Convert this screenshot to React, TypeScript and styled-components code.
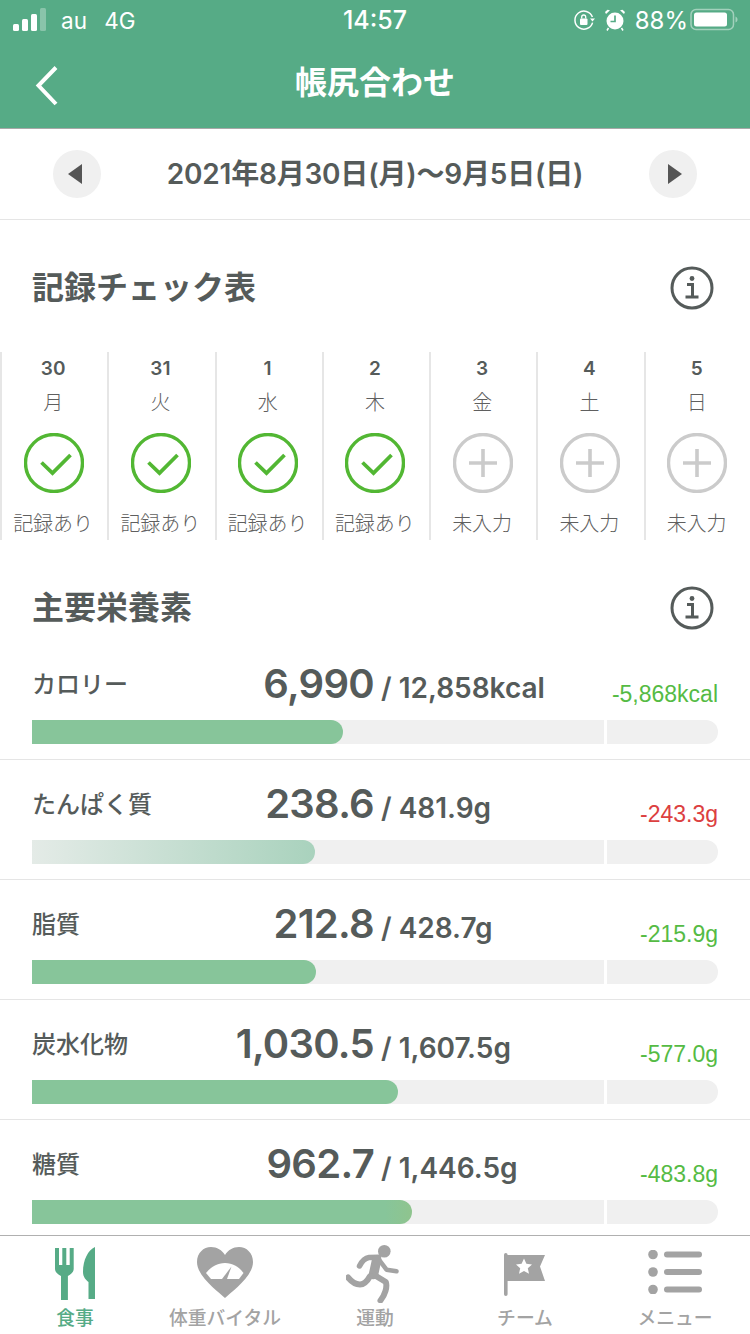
import React from "react";
import styled, { createGlobalStyle } from "styled-components";

const Global = createGlobalStyle`
  html, body { margin: 0; padding: 0; background: #fff; }
  body { width: 750px; height: 1334px; overflow: hidden; font-family: "Inter", "Noto Sans CJK JP", sans-serif; color: #555b5a; }
`;
const Page = styled.div`
  width: 750px; height: 1334px; display: flex; flex-direction: column; overflow: hidden; background: #fff;
`;
const TopArea = styled.header`
  background: #56ab86; height: 128px; border-bottom: 1px solid #a8a8a8; flex: none; color: #fff;
  display: flex; flex-direction: column;
`;
const StatusBar = styled.div`
  height: 40px; display: flex; align-items: center; padding: 0 12px 0 13px; position: relative;
  font-size: 22.5px; font-weight: 400;
`;
const Carrier = styled.span`
  margin-left: 15px; word-spacing: 11px;
`;
const Clock = styled.span`
  position: absolute; left: 0; right: 0; text-align: center; font-weight: 500; font-size: 25px;
`;
const StatusRight = styled.div`
  margin-left: auto; display: flex; align-items: center; gap: 10px;
`;
const Percent = styled.span`
  font-size: 24px; margin-right: -8px;
`;
const NavBar = styled.div`
  flex: 1; display: flex; align-items: center; justify-content: center; position: relative; padding-bottom: 3px;
`;
const BackBtn = styled.div`
  position: absolute; left: 35px; top: 25px; display: flex;
`;
const Title = styled.h1`
  margin: 0; font-size: 32px; font-weight: 700; color: #fff; line-height: 40px;
`;
const DateBar = styled.div`
  height: 90px; border-bottom: 1px solid #e5e5e5; flex: none; display: flex; align-items: center; justify-content: space-between; padding: 0 53px;
`;
const RoundBtn = styled.div<{ $shift: number }>`
  width: 48px; height: 48px; border-radius: 50%; background: #f0f0f0; display: flex; align-items: center; justify-content: center;
  padding-left: ${(p) => (p.$shift > 0 ? p.$shift : 0)}px;
  padding-right: ${(p) => (p.$shift < 0 ? -p.$shift : 0)}px;
  box-sizing: border-box;
`;
const DateText = styled.div`
  font-size: 28px; font-weight: 600; color: #555b5a; margin-top: -4px; letter-spacing: -0.2px;
`;
const SectionHead = styled.div<{ $h: number; $pad: number }>`
  height: ${(p) => p.$h}px; padding: ${(p) => p.$pad}px 36px 0 32px; box-sizing: border-box;
  display: flex; align-items: center; justify-content: space-between; flex: none;
`;
const SectionTitle = styled.h2`
  margin: -6px 0 0; font-size: 32px; font-weight: 700; color: #555b5a;
`;
const Week = styled.div`
  display: grid; grid-template-columns: repeat(7, 107.25px); height: 188px; flex: none;
`;
const Day = styled.div`
  border-left: 2px solid #e6e6e6; padding-right: 2px; display: flex; flex-direction: column; align-items: center; color: #555b5a;
`;
const DayNum = styled.div`
  font-size: 19px; font-weight: 600; line-height: 24px; margin: 5px 1px 0 0;
`;
const DayName = styled.div`
  font-size: 20px; font-weight: 300; line-height: 24px; margin: 10px 1px 0 0; color: #5f5f5f;
`;
const DayIcon = styled.div`
  margin-top: 18px; height: 60px; display: flex;
`;
const DayState = styled.div`
  font-size: 20px; font-weight: 300; line-height: 24px; margin: 19px 1px 0 0; color: #5f5f5f; white-space: nowrap;
`;
const Rows = styled.div`
  flex: 1; display: flex; flex-direction: column; overflow: hidden;
`;
const Row = styled.div`
  height: 119px; border-bottom: 1px solid #e5e5e5; flex: none; padding: 0 32px; display: flex; flex-direction: column;
`;
const RowTop = styled.div`
  height: 80px; box-sizing: border-box; padding-top: 8px; position: relative; display: grid; grid-template-columns: 342px auto 1fr; align-items: baseline;
`;
const Label = styled.div`
  position: absolute; left: 0; top: 30px; font-size: 24px; font-weight: 500; line-height: 30px; color: #555b5a;
`;
const Value = styled.div`
  grid-column: 1; text-align: right; font-size: 40px; font-weight: 600; letter-spacing: -0.7px; line-height: 72px; color: #555b5a;
`;
const Goal = styled.div`
  grid-column: 2; font-size: 28px; font-weight: 600; margin-left: 7px; white-space: nowrap; color: #555b5a;
`;
const Delta = styled.div<{ $bad?: boolean }>`
  grid-column: 3; text-align: right; font-family: "Liberation Sans", sans-serif; font-size: 23px; font-weight: 400;
  color: ${(p) => (p.$bad ? "#dc4040" : "#55bb44")}; position: relative; top: 4px;
`;
const Track = styled.div`
  height: 24px; background: #f0f0f0; border-radius: 0 12px 12px 0; position: relative; overflow: hidden;
`;
const Fill = styled.div<{ $kind: "plain" | "pale" | "tip" }>`
  height: 100%; border-radius: 0 12px 12px 0;
  background: ${(p) =>
    p.$kind === "pale"
      ? "linear-gradient(90deg, #e4ebe7 0%, #a9d2bd 100%)"
      : p.$kind === "tip"
      ? "linear-gradient(90deg, #87c59a 0%, #87c59a 93%, #8fc48e 100%)"
      : "#87c59a"};
`;
const Tick = styled.div`
  position: absolute; left: 572px; top: 0; bottom: 0; width: 3px; background: #fff;
`;
const TabBar = styled.nav`
  position: absolute; left: 0; right: 0; top: 1235px; height: 99px; box-sizing: border-box; background: #fff; border-top: 1px solid #b0b0b0; display: grid; grid-template-columns: repeat(5, 150px);
`;
const Tab = styled.div<{ $on?: boolean }>`
  display: flex; flex-direction: column; align-items: center; color: ${(p) => (p.$on ? "#56ab86" : "#a3a3a3")};
  font-size: 18.8px; font-weight: 500;
`;
const TabIcon = styled.div<{ $top: number }>`
  height: 71px; display: flex; align-items: flex-start; justify-content: center; padding-top: ${(p) => p.$top}px; box-sizing: border-box;
`;
const TabLabel = styled.div`
  line-height: 24px; white-space: nowrap;
`;

const Info = () => (
  <svg width="44" height="44" viewBox="0 0 44 44" fill="none">
    <circle cx="22" cy="22" r="20" stroke="#555b5a" strokeWidth="3" />
    <circle cx="22" cy="12.5" r="2.4" fill="#555b5a" />
    <path d="M17 18.500h5.500V30M15.500 31h13" stroke="#555b5a" strokeWidth="3" />
  </svg>
);
const Check = () => (
  <svg width="60" height="60" viewBox="0 0 60 60" fill="none">
    <circle cx="30" cy="30" r="28.500" stroke="#52b733" strokeWidth="3.400" />
    <path d="M17.500 29.500l11 10.500 18-18" stroke="#52b733" strokeWidth="3.800" />
  </svg>
);
const Plus = () => (
  <svg width="60" height="60" viewBox="0 0 60 60" fill="none">
    <circle cx="30" cy="30" r="28.500" stroke="#cbcbcb" strokeWidth="3.400" />
    <path d="M16 30h28M30 16v28" stroke="#cbcbcb" strokeWidth="3.600" />
  </svg>
);
const Signal = () => (
  <svg width="33" height="24" viewBox="0 0 33 24">
    <rect x="0" y="16" width="6" height="7" rx="1.500" fill="#fff" />
    <rect x="9" y="11" width="6" height="12" rx="1.500" fill="#fff" />
    <rect x="18" y="6" width="6" height="17" rx="1.500" fill="#fff" />
    <rect x="27" y="0" width="6" height="23" rx="1.500" fill="#fff" opacity=".3" />
  </svg>
);
const RotationLock = () => (
  <svg width="22" height="22" viewBox="0 0 22 22" fill="none">
    <path d="M19.400 8A9 9 0 1 0 19.600 13.600" stroke="#fff" strokeWidth="1.500" />
    <path d="M17 9.500h5l-2.500 3z" fill="#fff" />
    <rect x="7" y="9.500" width="7.500" height="6.500" rx="1" fill="#fff" />
    <path d="M8.700 9.500V8a2 2 0 0 1 4 0v1.500" stroke="#fff" strokeWidth="1.300" />
  </svg>
);
const Alarm = () => (
  <svg width="20" height="22" viewBox="0 0 20 22" fill="none">
    <circle cx="10" cy="12" r="8.500" fill="#fff" />
    <path d="M10 6.500V12.500H5.500" stroke="#56ab86" strokeWidth="1.700" />
    <path d="M1 5L5 1.200 2.500.8 0 3zM19 5L15 1.200 17.500.8 20 3z" fill="#fff" />
    <path d="M3.500 19L2 21.500M16.500 19l1.500 2.500" stroke="#fff" strokeWidth="1.500" />
  </svg>
);
const Battery = () => (
  <svg width="48" height="24" viewBox="0 0 48 24" fill="none">
    <rect x="1" y="1.500" width="42.500" height="20" rx="5" stroke="#fff" strokeOpacity=".45" strokeWidth="1.500" />
    <rect x="4" y="4.500" width="33" height="14" rx="2.500" fill="#fff" />
    <path d="M45.500 8.500v6c1.200-.5 2-1.500 2-3s-.8-2.500-2-3z" fill="#fff" fillOpacity=".45" />
  </svg>
);
const Chevron = () => (
  <svg width="24" height="42" viewBox="0 0 24 42" fill="none">
    <path d="M21 2.500L3.500 20.500 21 39" stroke="#fff" strokeWidth="4" />
  </svg>
);
const TriLeft = () => (
  <svg width="14" height="20" viewBox="0 0 14 20"><path d="M14 0v20L0 10z" fill="#555" /></svg>
);
const TriRight = () => (
  <svg width="14" height="20" viewBox="0 0 14 20"><path d="M0 0v20L14 10z" fill="#555" /></svg>
);
const FoodIcon = () => (
  <svg width="40" height="53" viewBox="0 0 40 53" fill="#56ab86">
    <path d="M0 1h4v17h3.300V1h4v17h3.400V1h4v21c0 3-2.500 5-5.800 7v24H6V29C2.500 27 0 25 0 22z" />
    <path d="M40 0v52h-6.500V35C31 33 28 30 28 25 28 13 33 3 40 0z" />
  </svg>
);
const HeartIcon = () => (
  <svg width="56" height="52" viewBox="0 0 56 52">
    <path d="M28 51C22 45 0 30 0 15 0 6 6.500 0 14 0c6 0 11 3 14 8 3-5 8-8 14-8 7.500 0 14 6 14 15 0 15-22 30-28 36z" fill="#a3a3a3" />
    <path d="M9 26C14 20 20 16 28 16s14 4 18.500 10L42 32H14z" fill="#fff" />
    <path d="M25 32l9.500-12.500L30 32z" fill="#a3a3a3" />
  </svg>
);
const RunIcon = () => (
  <svg width="58" height="58" viewBox="0 0 58 58" fill="none" stroke="#a3a3a3" strokeLinecap="round" strokeLinejoin="round">
    <circle cx="38.300" cy="6.300" r="6.300" fill="#a3a3a3" stroke="none" />
    <path d="M13.500 21C16 16 19 13 23 12.500l9.500-.2" strokeWidth="5.500" />
    <path d="M32.500 14l8 10.700 10 1.600" strokeWidth="4.500" />
    <path d="M30.700 14.700L27.500 29.500" strokeWidth="9.500" />
    <path d="M28.300 30l11.500 7c1.800 5-1 13-5.300 18.500" strokeWidth="6" />
    <path d="M24 31.300c-2.500 4.500-6 8.200-10 8.200-4.500 0-8.500-2.700-12-7" strokeWidth="6" />
  </svg>
);
const FlagIcon = () => (
  <svg width="42" height="43" viewBox="0 0 42 43">
    <path d="M0 1.800a1.800 1.800 0 0 1 3.600 0V2H41l-5 11.500L41 28H3.600v13.200a1.800 1.800 0 0 1-3.600 0z" fill="#a3a3a3" />
    <path d="M20 5.500l2.400 5.300 5.600.6-4.200 3.800 1.200 5.600-5-2.900-5 2.900 1.200-5.600-4.200-3.800 5.600-.6z" fill="#fff" />
  </svg>
);
const MenuIcon = () => (
  <svg width="54" height="44" viewBox="0 0 54 44" fill="#a3a3a3">
    <circle cx="5" cy="4.500" r="4.800" /><circle cx="5" cy="22" r="4.800" /><circle cx="5" cy="39.500" r="4.800" />
    <rect x="16" y="1.500" width="38" height="6" rx="3" />
    <rect x="16" y="19" width="38" height="6" rx="3" />
    <rect x="16" y="36.500" width="38" height="6" rx="3" />
  </svg>
);

const days = [
  ["30", "月", true], ["31", "火", true], ["1", "水", true], ["2", "木", true],
  ["3", "金", false], ["4", "土", false], ["5", "日", false],
] as const;

const nutrients = [
  { label: "カロリー", value: "6,990", goal: "/ 12,858kcal", delta: "-5,868kcal", pct: 311, kind: "plain" },
  { label: "たんぱく質", value: "238.6", goal: "/ 481.9g", delta: "-243.3g", pct: 283, kind: "pale", bad: true },
  { label: "脂質", value: "212.8", goal: "/ 428.7g", delta: "-215.9g", pct: 284, kind: "plain" },
  { label: "炭水化物", value: "1,030.5", goal: "/ 1,607.5g", delta: "-577.0g", pct: 366, kind: "plain" },
  { label: "糖質", value: "962.7", goal: "/ 1,446.5g", delta: "-483.8g", pct: 380, kind: "tip" },
] as const;

export default function App() {
  return (
    <Page>
      <Global />
      <TopArea>
        <StatusBar>
          <Signal />
          <Carrier>au 4G</Carrier>
          <Clock>14:57</Clock>
          <StatusRight>
            <RotationLock />
            <Alarm />
            <Percent>88%</Percent>
            <Battery />
          </StatusRight>
        </StatusBar>
        <NavBar>
          <BackBtn><Chevron /></BackBtn>
          <Title>帳尻合わせ</Title>
        </NavBar>
      </TopArea>
      <DateBar>
        <RoundBtn $shift={-4}><TriLeft /></RoundBtn>
        <DateText>2021年8月30日(月)〜9月5日(日)</DateText>
        <RoundBtn $shift={4}><TriRight /></RoundBtn>
      </DateBar>
      <SectionHead $h={132} $pad={4}>
        <SectionTitle>記録チェック表</SectionTitle>
        <Info />
      </SectionHead>
      <Week>
        {days.map(([n, d, ok]) => (
          <Day key={n}>
            <DayNum>{n}</DayNum>
            <DayName>{d}</DayName>
            <DayIcon>{ok ? <Check /> : <Plus />}</DayIcon>
            <DayState>{ok ? "記録あり" : "未入力"}</DayState>
          </Day>
        ))}
      </Week>
      <SectionHead $h={100} $pad={36}>
        <SectionTitle>主要栄養素</SectionTitle>
        <Info />
      </SectionHead>
      <Rows>
        {nutrients.map((r) => (
          <Row key={r.label}>
            <RowTop>
              <Label>{r.label}</Label>
              <Value>{r.value}</Value>
              <Goal>{r.goal}</Goal>
              <Delta $bad={"bad" in r && r.bad}>{r.delta}</Delta>
            </RowTop>
            <Track>
              <Fill $kind={r.kind} style={{ width: r.pct }} />
              <Tick />
            </Track>
          </Row>
        ))}
      </Rows>
      <TabBar>
        <Tab $on><TabIcon $top={11}><FoodIcon /></TabIcon><TabLabel>食事</TabLabel></Tab>
        <Tab><TabIcon $top={11}><HeartIcon /></TabIcon><TabLabel>体重バイタル</TabLabel></Tab>
        <Tab><TabIcon $top={9}><RunIcon /></TabIcon><TabLabel>運動</TabLabel></Tab>
        <Tab><TabIcon $top={17}><FlagIcon /></TabIcon><TabLabel>チーム</TabLabel></Tab>
        <Tab><TabIcon $top={14}><MenuIcon /></TabIcon><TabLabel>メニュー</TabLabel></Tab>
      </TabBar>
    </Page>
  );
}
